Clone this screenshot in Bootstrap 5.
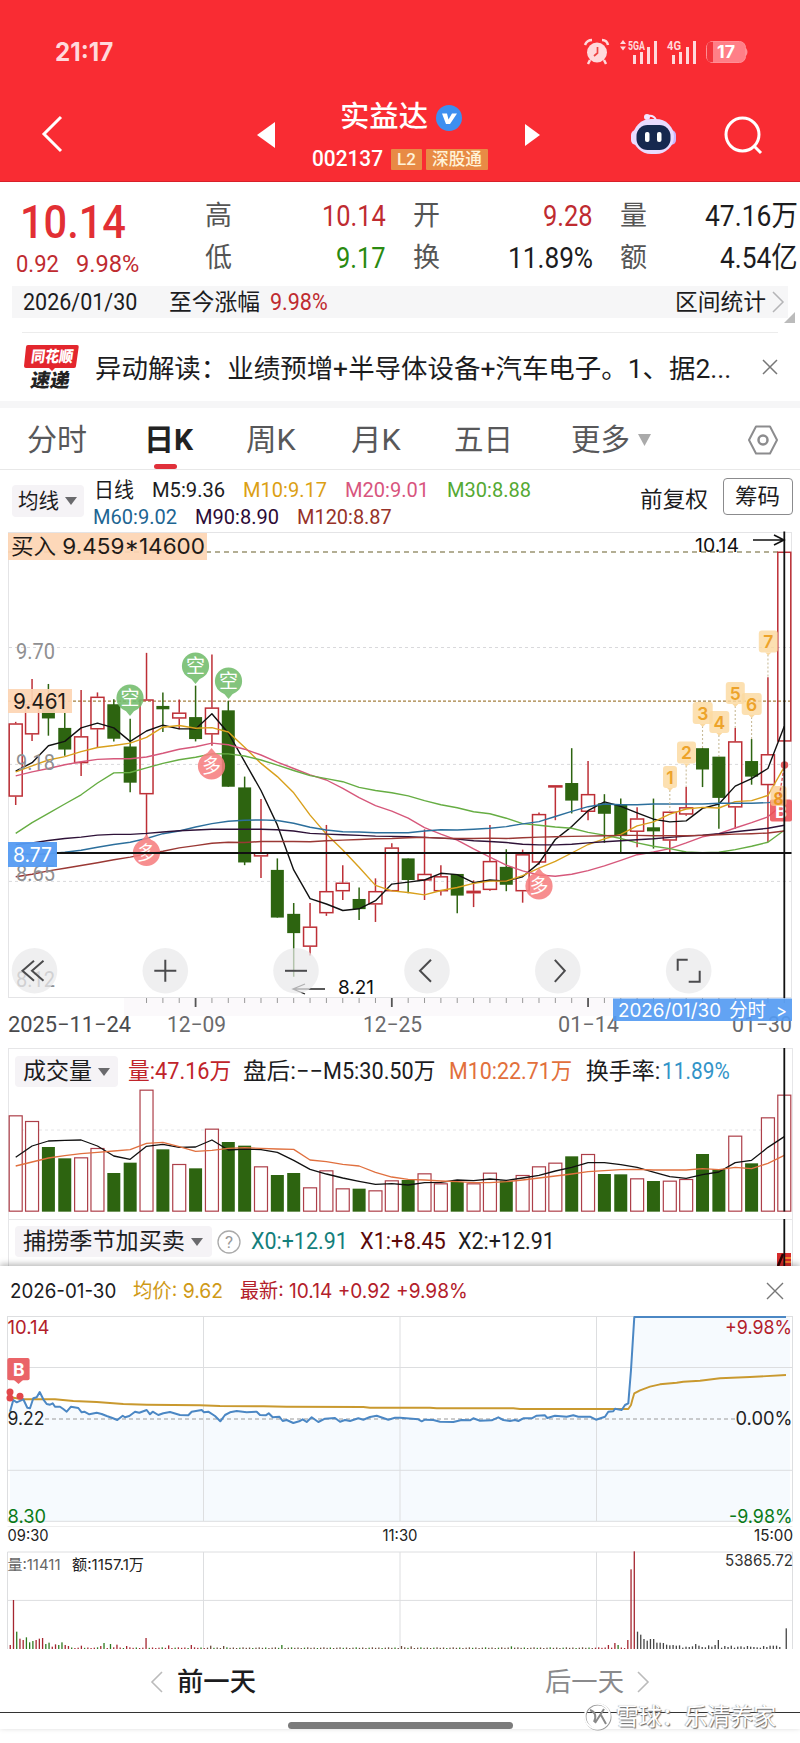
<!DOCTYPE html>
<html lang="zh-CN">
<head>
<meta charset="utf-8">
<meta name="viewport" content="width=device-width, initial-scale=1">
<title>实益达 002137</title>
<link href="https://cdn.jsdelivr.net/npm/bootstrap@5.3.0/dist/css/bootstrap.min.css" rel="stylesheet">
<style>
  :root { --up:#bf2b30; --down:#2a8a10; --din:Roboto,"Noto Sans CJK SC",sans-serif; --round:Inter,"Noto Sans CJK SC",sans-serif; }
  body { width:800px; height:1743px; overflow:hidden; background:#fff; color:#1c1c1e; font-family:var(--din); line-height:1; }
  svg { display:block; overflow:visible; }
  .fit { display:inline-block; white-space:nowrap; transform-origin:0 50%; flex:none; }
  .up { color:var(--up); } .down { color:var(--down); }
  .app-head { height:182px; background:#f92c33; color:#fff; border-bottom:1px solid #d8202a; }
  .status { height:104px; padding:0 51px 0 55px; }
  .clock { font:700 25px/1 var(--round); color:#ffd9dc; }
  .title-bar { height:77px; padding:0 36px 0 41px; }
  .stock-name { font-size:29px; font-weight:500; }
  .code { font-size:22px; font-weight:500; }
  .chip { height:21px; background:#e88a45; color:#fff3d8; font-size:17px; font-weight:500; border-radius:1px; }
  .quote { height:104px; }
  .price { font-size:47px; font-weight:500; color:#e22f34; }
  .delta { font-size:24px; }
  .quote-grid { display:grid; grid-template-columns:181px 180px 178px; column-gap:27px; align-content:start; padding-top:13px; font-size:29px; }
  .quote-grid > div { height:42px; }
  .quote-grid .key { font-size:27px; color:#555; }
  .range-strip { height:32px; margin:0 12px; background:#f6f6f7; font-size:23px; }
  .news { height:69px; margin:14px 22px 0; border-top:1px solid #ececec; font-size:26px; }
  .band { height:7px; background:#f6f6f7; }
  .tabs { height:62px; padding:3px 0 0 27px; border-bottom:1px solid #e8e8e8; font-size:30px; color:#58585a; }
  .tabs .on { color:#222; font-weight:700; left:-1px; }
  .tabs .on i { left:10px; top:39px; width:23px; height:5px; border-radius:3px; background:#e0303a; }
  .ma { height:61px; font-size:21px; }
  .drop { background:#f5f3f6; border-radius:4px; }
  .caret { width:0; height:0; border:6px solid transparent; border-top:8px solid #6a6a6d; border-bottom:0; }
  .chips-btn { width:70px; height:37px; margin-right:7px; border:1px solid #8b8b8d; border-radius:4px; font-size:22px; }
  .kline { height:517px; padding-top:1px; }
  .pane { border:1px solid #e6e6e8; border-bottom:0; margin:0 7px 0 8px; }
  .pane svg.plot { position:absolute; left:-9px; top:-1px; }
  .vol { height:171px; font-size:23px; }
  .sub { height:47px; font-size:23px; }
  .sheet { background:#fff; box-shadow:0 -2px 6px rgba(0,0,0,.28); font-family:var(--round); }
  .sheet-head { height:50px; padding:0 17px 0 10px; font-size:20px; }
  .day-nav { height:62px; border-bottom:1px solid #333; font-size:26px; font-family:var(--din); }
  .home { width:225px; height:7px; border-radius:4px; background:#7b7b7b; margin:9px 0 0 288px; }
  .watermark { left:583px; top:1702px; color:#fff; text-shadow:1px 1px 1px #666, -1px 0 1px #bbb; font-size:24px; }
  .bb { font-family:var(--round); }
</style>
</head>
<body class="position-relative">

<header class="app-head">
  <div class="status d-flex align-items-center justify-content-between">
    <span class="clock fit" data-w="58">21:17</span>
    <svg width="164" height="26" viewBox="0 0 164 26" fill="#ffd9dc">
      <circle cx="12" cy="13.500" r="10"/><path d="M0 6Q2 1 7 1M17 1Q22 1 23 6" fill="none" stroke="#ffd9dc" stroke-width="2.500"/><path d="M5 21 3 25M19 21 21 25" stroke="#ffd9dc" stroke-width="2.500"/><path d="M12.500 8V14L9 17" stroke="#e44" stroke-width="1.700" fill="none"/>
      <path d="M35 5 38 1 41 5ZM35 7.500 38 11.500 41 7.500Z"/>
      <text x="43" y="11" font-size="13" font-weight="700" textLength="17" lengthAdjust="spacingAndGlyphs">5GA</text>
      <path d="M48 16h3v9h-3zM55 13h3v12h-3zM62 8h3v17h-3zM69 2h3v23h-3zM87 16h3v9h-3zM94 13h3v12h-3zM101 8h3v17h-3zM108 2h3v23h-3z"/>
      <text x="82" y="11" font-size="13" font-weight="700" textLength="14" lengthAdjust="spacingAndGlyphs">4G</text>
      <rect x="121.500" y="2.500" width="39" height="21" rx="6" fill="#ff7f87" stroke="#ff8f95"/><path d="M128 3h-2q-4 0-4 5v10q0 5 4 5h2z" fill="#f2343c"/><path d="M161 9q3 4 0 8z" fill="#ff8f95"/>
      <text x="132" y="19" font-size="17" font-weight="700" fill="#fff" font-family="Inter" textLength="18" lengthAdjust="spacingAndGlyphs">17</text>
    </svg>
  </div>
  <div class="title-bar d-flex align-items-start">
    <svg width="22" height="36" class="mt-2" viewBox="0 0 22 36"><path d="M20 5 3 22 20 39" fill="none" stroke="#fff" stroke-width="3"/></svg>
    <svg width="18" height="26" style="margin:18px 0 0 194px"><path d="M18 0V26L0 13Z" fill="#fff"/></svg>
    <div style="width:178px;margin-left:37px">
      <div class="d-flex align-items-center" style="height:27px;padding-left:28px">
        <span class="stock-name fit" data-w="88">实益达</span>
        <svg class="ms-2" width="26" height="26" viewBox="0 0 26 26"><circle cx="13" cy="13" r="13" fill="#3d8ff0"/><path d="M6 8.500h5l1.500 6L16 8.500h5L14 19h-4z" fill="#fff"/></svg>
      </div>
      <div class="d-flex align-items-center" style="height:22px;margin-top:17px">
        <span class="code fit" data-w="71">002137</span>
        <span class="chip d-flex align-items-center justify-content-center" style="width:31px;margin-left:8px"><span>L2</span></span>
        <span class="chip d-flex align-items-center justify-content-center" style="width:62px;margin-left:4px"><span class="fit" data-w="50">深股通</span></span>
      </div>
    </div>
    <svg width="15" height="22" style="margin:20px 0 0 35px"><path d="M0 0V22L15 11Z" fill="#fff"/></svg>
    <svg width="46" height="42" viewBox="0 0 46 42" style="margin:9px 0 0 91px">
      <path d="M25 7Q23 2 17 3" fill="none" stroke="#f3e6ff" stroke-width="2"/><circle cx="16" cy="4" r="3" fill="#f3e6ff"/>
      <rect y="17" width="10" height="15" rx="5" fill="#eddcff"/><rect x="35" y="17" width="10" height="15" rx="5" fill="#c9b8ff"/>
      <rect x="2" y="6" width="41" height="35" rx="18" fill="#e9dcff"/><rect x="5.500" y="12" width="34" height="25" rx="11" fill="#16284f"/>
      <rect x="14" y="19" width="4.500" height="10" rx="2" fill="#fff"/><rect x="26" y="19" width="4.500" height="10" rx="2" fill="#fff"/>
    </svg>
    <svg width="39" height="38" viewBox="0 0 39 38" style="margin:12px 0 0 47px"><circle cx="18.500" cy="18.500" r="16.500" fill="none" stroke="#fff" stroke-width="3"/><path d="m30 30 7 7" stroke="#fff" stroke-width="3"/></svg>
  </div>
</header>

<section class="quote d-flex">
  <div style="width:205px;padding:16px 0 0 16px">
    <div style="height:47px;padding-left:4px"><span class="price fit" data-w="106">10.14</span></div>
    <div class="d-flex up delta" style="margin-top:7px;gap:17px"><span class="fit" data-w="43">0.92</span><span class="fit" data-w="63">9.98%</span></div>
  </div>
  <div class="quote-grid">
    <div class="d-flex align-items-center justify-content-between"><span class="key">高</span><span class="up fit" data-w="64">10.14</span></div>
    <div class="d-flex align-items-center justify-content-between"><span class="key">开</span><span class="up fit" data-w="50">9.28</span></div>
    <div class="d-flex align-items-center justify-content-between"><span class="key">量</span><span class="fit" data-w="93">47.16万</span></div>
    <div class="d-flex align-items-center justify-content-between"><span class="key">低</span><span class="down fit" data-w="50">9.17</span></div>
    <div class="d-flex align-items-center justify-content-between"><span class="key">换</span><span class="fit" data-w="85">11.89%</span></div>
    <div class="d-flex align-items-center justify-content-between"><span class="key">额</span><span class="fit" data-w="78">4.54亿</span></div>
  </div>
</section>

<section class="range-strip d-flex align-items-center position-relative" style="padding:0 4px 0 11px">
  <span class="fit" data-w="114">2026/01/30</span>
  <span class="fit" data-w="91" style="margin-left:32px">至今涨幅</span>
  <span class="fit up" data-w="58" style="margin-left:10px">9.98%</span>
  <span class="fit ms-auto" data-w="91">区间统计</span>
  <svg width="12" height="22" style="margin-left:6px"><path d="m1 1 10 10L1 21" fill="none" stroke="#b5b5b7" stroke-width="1.500"/></svg>
  <svg width="11" height="11" class="position-absolute" style="right:-7px;top:26px"><path d="M11 0V11H0Z" fill="#bbb"/></svg>
</section>

<section class="news d-flex align-items-center">
  <svg width="55" height="46" viewBox="0 0 55 46" style="margin-left:2px">
    <path d="M4 1H53q2 0 1.700 2L52 22q0 2-2 2H31l-3 3-3-3H2q-2 0-2-2L2 3Q2 1 4 1Z" fill="#e3262d"/>
    <g font-family="Noto Sans CJK SC" font-weight="900"><text transform="skewX(-8)" x="9" y="18.500" font-size="15.500" fill="#fff" textLength="42" lengthAdjust="spacingAndGlyphs">同花顺</text>
    <text transform="skewX(-10)" x="13.500" y="43.500" font-size="19" fill="#222" textLength="39" lengthAdjust="spacingAndGlyphs">速递</text></g>
  </svg>
  <span class="fit" data-w="636" style="margin:3px 0 0 16px">异动解读：业绩预增+半导体设备+汽车电子。1、据2...</span>
  <svg width="16" height="16" class="ms-auto"><path d="M1 1 15 15M15 1 1 15" stroke="#777" stroke-width="1.500"/></svg>
</section>
<div class="band"></div>

<nav class="tabs d-flex align-items-center">
  <span class="fit" data-w="60">分时</span>
  <span class="position-relative on" style="margin-left:58px"><span class="fit" data-w="49">日K</span><i class="position-absolute"></i></span>
  <span class="fit" data-w="50" style="margin-left:52px">周K</span>
  <span class="fit" data-w="50" style="margin-left:55px">月K</span>
  <span class="fit" data-w="59" style="margin-left:53px">五日</span>
  <span class="fit" data-w="59" style="margin-left:58px">更多</span>
  <svg width="13" height="12" style="margin-left:8px"><path d="M0 0H13L6.500 12Z" fill="#aaa"/></svg>
  <svg width="30" height="30" viewBox="0 0 30 30" style="margin-left:97px"><path d="M8 1.500H22L29 15 22 28.500H8L1 15Z" fill="none" stroke="#8c8c8e" stroke-width="2" stroke-linejoin="round"/><circle cx="15" cy="15" r="4.500" fill="none" stroke="#8c8c8e" stroke-width="2.500"/></svg>
</nav>

<section class="ma d-flex">
  <div class="drop d-flex align-items-center" style="width:72px;height:32px;margin:15px 0 0 12px;padding:0 7px 0 6px"><span class="fit" data-w="41">均线</span><span class="caret ms-auto"></span></div>
  <div style="margin:7px 0 0 9px">
    <div class="d-flex align-items-center" style="height:27px;padding-left:1px;gap:18px">
      <span class="fit" data-w="40">日线</span><span class="fit" data-w="73">M5:9.36</span>
      <span class="fit" data-w="84" style="color:#dca014">M10:9.17</span><span class="fit" data-w="84" style="color:#d8557e">M20:9.01</span><span class="fit" data-w="84" style="color:#55a933">M30:8.88</span>
    </div>
    <div class="d-flex align-items-center" style="height:27px;gap:18px">
      <span class="fit" data-w="84" style="color:#1d6592">M60:9.02</span><span class="fit" data-w="84" style="color:#2c0a36">M90:8.90</span><span class="fit" data-w="95" style="color:#973228">M120:8.87</span>
    </div>
  </div>
  <span class="fit ms-auto" data-w="68" style="margin-top:19px;font-size:22px">前复权</span>
  <div class="chips-btn d-flex align-items-center justify-content-center" style="margin-top:8px;margin-left:15px"><span class="fit" data-w="45">筹码</span></div>
</section>

<section class="kline"><svg id="kline" width="800" height="515" viewBox="0 532 800 515"></svg></section>

<section class="pane vol position-relative">
  <svg class="plot" id="volume" width="800" height="171" viewBox="0 1048 800 171"></svg>
  <div class="d-flex align-items-center position-relative" style="padding:7px 0 0 6px">
    <div class="drop d-flex align-items-center" style="width:103px;height:31px;padding:0 8px"><span class="fit" data-w="69">成交量</span><span class="caret ms-auto"></span></div>
    <span class="fit" data-w="103" style="margin-left:10px;color:#c0242a">量:47.16万</span>
    <span class="fit" data-w="80" style="margin-left:12px">盘后:−−</span><span class="fit" data-w="112">M5:30.50万</span>
    <span class="fit" data-w="123" style="margin-left:13px;color:#e2703c">M10:22.71万</span>
    <span class="fit" data-w="75" style="margin-left:14px">换手率:</span><span class="fit" data-w="68" style="margin-left:2px;color:#3294c8">11.89%</span>
  </div>
</section>

<section class="pane sub position-relative">
  <svg class="plot" width="800" height="47" viewBox="0 1219 800 47"><rect x="777" y="1253" width="14" height="13" fill="#d62b2b"/><path d="M778 1266 783 1254" stroke="#300" stroke-width="2.500"/><path d="M785 1258h6M785 1262h6" stroke="#ff9b2f" stroke-width="1.500"/><path d="M784.300 1219V1266" stroke="#111" stroke-width="1.800"/></svg>
  <div class="d-flex align-items-center position-relative" style="padding:6px 0 0 6px">
    <div class="drop d-flex align-items-center" style="width:197px;height:31px;padding:0 9px 0 8px"><span class="fit" data-w="162">捕捞季节加买卖</span><span class="caret ms-auto"></span></div>
    <svg width="24" height="24" style="margin-left:5px"><circle cx="12" cy="12" r="11" fill="none" stroke="#aaa" stroke-width="1.300"/><text x="12" y="18" text-anchor="middle" font-size="17" fill="#999">?</text></svg>
    <span class="fit" data-w="97" style="margin-left:10px;color:#147f7c">X0:+12.91</span>
    <span class="fit" data-w="86" style="margin-left:12px;color:#5c0808">X1:+8.45</span>
    <span class="fit" data-w="97" style="margin-left:12px">X2:+12.91</span>
  </div>
</section>

<section class="sheet position-relative">
  <div class="sheet-head d-flex align-items-center">
    <span class="fit" data-w="106">2026-01-30</span>
    <span class="fit" data-w="90" style="margin-left:17px;color:#cf9a17">均价: 9.62</span>
    <span class="fit" data-w="228" style="margin-left:17px;color:#b3202a">最新: 10.14 +0.92 +9.98%</span>
    <svg width="16" height="16" class="ms-auto"><path d="M0 0 16 16M16 0 0 16" stroke="#777" stroke-width="1.400"/></svg>
  </div>
  <svg id="intraday" width="800" height="335" viewBox="0 1316 800 335"></svg>
  <div class="day-nav d-flex align-items-center">
    <svg width="12" height="22" style="margin-left:151px"><path d="M11 1 1 11 11 21" fill="none" stroke="#bbb" stroke-width="1.600"/></svg>
    <span class="fit fw-medium" data-w="79" style="margin-left:14px">前一天</span>
    <span class="fit" data-w="79" style="margin-left:289px;color:#8a8a8c">后一天</span>
    <svg width="12" height="22" style="margin-left:13px"><path d="m1 1 10 10L1 21" fill="none" stroke="#bbb" stroke-width="1.600"/></svg>
  </div>
  <div class="home"></div>
</section>

<div class="watermark position-absolute d-flex align-items-center">
  <svg width="29" height="29" viewBox="0 0 29 29" fill="none"><circle cx="15" cy="15" r="12.500" stroke="#999" stroke-width="2"/><circle cx="14.300" cy="14.300" r="12.500" stroke="#fff" stroke-width="1.800"/><path d="M7 8q8 3 4 12M21 7l-9 14M18 13l5 9" stroke="#888" stroke-width="2"/></svg>
  <span class="fit" data-w="160" style="margin-left:4px">雪球：乐清养家</span>
</div>

<script src="https://cdn.jsdelivr.net/npm/bootstrap@5.3.0/dist/js/bootstrap.bundle.min.js"></script>
<script>
// Condense labels to the DIN-like widths of the design.
document.querySelectorAll('.fit').forEach(e => {
  const n = e.offsetWidth, w = +e.dataset.w;
  e.style.transform = `scaleX(${w / n})`;
  e.style.marginRight = (w - n) + 'px';
});

const RED = '#bd2f36', GREEN = '#2d6410';
const X = i => 15.7 + 16.353 * i;
const Y = v => 520 + v / 2.958;
const line = (x1, y1, x2, y2, c, w = 1, d = '') => `<path d="M${x1} ${y1}L${x2} ${y2}" stroke="${c}" stroke-width="${w}" stroke-dasharray="${d}" fill="none"/>`;
const rect = (x, y, w, h, f, s = 'none', sw = 1, extra = '') => `<rect x="${x}" y="${y}" width="${w}" height="${h}" fill="${f}" stroke="${s}" stroke-width="${sw}" ${extra}/>`;
const text = (x, y, w, s, size, c, extra = '') => `<text x="${x}" y="${y}" font-size="${size}" fill="${c}" textLength="${w}" lengthAdjust="spacingAndGlyphs" ${extra}>${s}</text>`;
const poly = (pts, c, w = 1.2) => `<polyline points="${pts.map(p => p.join()).join(' ')}" fill="none" stroke="${c}" stroke-width="${w}" stroke-linejoin="round"/>`;

// kind, high, body top, body bottom, low
const candles = [
 ['r',597,602,818,843],['r',470,545,634,654],['g',485,545,587,638],['g',570,615,679,697],['r',503,640,719,757],['r',510,523,619,672],['g',530,545,647,655],['g',588,670,777,805],
 ['r',393,531,811,935],['g',510,550,560,627],['r',531,570,587,619],['g',490,583,648,655],['r',398,555,634,668],['g',535,563,789,789],['g',759,791,1013,1021],['r',825,983,995,1059],
 ['g',1001,1035,1176,1176],['g',1133,1165,1222,1351],['r',1133,1203,1262,1288],['r',902,1098,1163,1171],['r',1021,1073,1098,1124],['g',1087,1121,1151,1183],['r',1060,1098,1137,1189],['r',956,969,1098,1098],
 ['g',1001,1001,1065,1104],['r',915,1047,1066,1124],['r',1021,1054,1098,1111],['g',1047,1047,1111,1163],['r',1066,1097,1104,1145],['r',902,1009,1094,1097],['g',974,1026,1079,1098],['r',975,989,1098,1132],
 ['r',865,870,1013,1020],['r',785,785,791,888],['g',675,778,830,868],['r',713,811,863,888],['g',811,838,869,955],['g',824,842,935,983],['r',850,883,922,968],['g',824,909,921,972],
 ['r',863,863,948,983],['r',790,850,871,875],['g',675,675,738,790],['g',700,700,822,913],['r',615,655,850,913],['g',648,713,759,783],['r',465,693,784,953],['r',94,94,655,655]];
const averages = {
 '#111': [743,718,668,655,615,601,615,655,624,607,618,618,573,630,715,800,902,1035,1120,1136,1155,1150,1126,1077,1071,1065,1045,1049,1073,1065,1068,1055,1015,945,907,860,834,847,866,885,893,890,853,840,787,765,735,610],
 '#d9a01c': [745,727,710,700,685,673,667,660,643,613,608,616,614,627,672,720,759,807,873,929,976,1027,1081,1097,1102,1109,1096,1087,1075,1068,1068,1052,1030,1010,985,960,943,930,905,893,870,855,850,852,833,830,815,730],
 '#d6587b': [757,745,735,724,715,708,706,706,701,690,678,671,660,665,678,695,716,735,754,769,794,821,845,861,882,910,929,947,973,997,1021,1038,1050,1054,1048,1037,1023,1007,990,982,972,955,937,928,911,895,878,838],
 '#66ad43': [927,895,868,840,813,778,748,747,733,720,709,702,692,692,698,710,725,741,756,765,774,791,800,807,816,830,842,851,863,869,882,898,903,908,912,924,932,942,955,965,972,982,984,983,975,965,953,918],
 '#2c6f9c': [985,990,987,983,977,968,960,953,942,928,920,908,898,891,888,887,889,897,909,917,922,923,925,925,925,920,916,917,915,912,907,899,892,877,862,848,840,842,842,840,840,840,840,838,838,838,836,832],
 '#2e1238': [960,955,948,942,938,932,930,930,927,923,919,917,915,915,915,915,916,920,927,929,931,933,935,936,937,939,941,944,949,951,954,959,961,961,959,955,952,949,946,943,939,935,932,928,922,917,912,903],
 '#9a3834': [1055,1048,1038,1030,1022,1014,1005,997,988,980,970,963,956,953,954,951,951,951,952,949,947,945,943,942,940,939,941,942,942,941,942,940,938,937,936,935,934,933,933,934,934,934,933,931,929,928,926,920]};

let k = rect(8.5, 532.5, 783, 465, 'none', '#e4e4e6');
[647.5, 764.4, 881.4].forEach(y => k += line(9, y, 791, y, '#d9d9dc', 1, '3 3'));
k += line(8, 552, 780, 552, '#9b9472', 1.3, '5 4') + line(8, 701.2, 790, 701.2, '#a5803f', 1.3, '3 2');
candles.forEach(([c, h, t, b, l], i) => {
  const x = X(i), col = c === 'r' ? RED : GREEN;
  if (c === 'g') k += line(x, Y(h), x, Y(l), col, 1.5) + rect(x - 6.5, Y(t), 13, Y(b) - Y(t), col);
  else k += line(x, Y(h), x, Y(t), col, 1.5) + line(x, Y(b), x, Y(l), col, 1.5) + rect(x - 6.5, Y(t) + .5, 13, Math.max(Y(b) - Y(t) - 1, 1), 'none', col, 1.5);
});
Object.entries(averages).forEach(([c, a]) => k += poly(a.map((v, i) => [X(i).toFixed(1), Y(v).toFixed(1)]), c, 1.4));
[['9.70', 658.6], ['9.18', 769.5], ['8.65', 881], ['8.12', 986.5]].forEach(([s, y]) => k += text(16, y, 39, s, 22, '#909092'));
// Signal bubbles
const bubble = (x, y, s, c, tip) => `<g opacity=".88"><circle cx="${x}" cy="${y}" r="13.600" fill="${c}"/><path d="M${x - 5} ${y + tip * 12}h10L${x} ${y + tip * 18}Z" fill="${c}"/><text x="${x}" y="${y + 7}" text-anchor="middle" font-size="19" fill="#fff">${s}</text></g>`;
[[130, 698], [195.5, 666], [228.5, 681]].forEach(p => k += bubble(...p, '空', '#72bd6c', 1));
[[146.500, 852.500], [211.500, 766], [539, 886]].forEach(p => k += bubble(...p, '多', '#f77f80', -1));
// Numbered tags
[[1,670,777,40,14],[2,686.5,752.5,41,19],[3,702.7,713,42,20],[4,719.3,722,43,20],[5,735.3,693,44,19],[6,751.7,704,45,20],[7,768.3,641.5,46,19]].forEach(([n, x, y, i, w]) => {
  k += line(X(i), y + 13, X(i), Y(candles[i][1]), '#c9bc9a', 1.1, '2 2') + rect(x - w / 2, y - 11, w, 22, '#fbd9a0', 'none', 1, 'rx="3" opacity=".82"') +
    `<path d="M${x - 3} ${y + 11}h6l-3 3z" fill="#fbd9a0"/><text x="${x}" y="${y + 6.500}" text-anchor="middle" font-family="Inter" font-weight="600" font-size="17.500" fill="#eda32a">${n}</text>`;
});
k += rect(770, 799.6, 22, 22, '#ec5055', 'none', 1, 'rx="2" opacity=".88"') + `<text x="781" y="818" text-anchor="middle" font-size="19" font-weight="700" fill="#fff">B</text>` +
  rect(770.5, 786, 16, 20, '#fac98a', 'none', 1, 'rx="3" opacity=".75"') + `<text x="778.500" y="805" text-anchor="middle" font-size="18" font-weight="600" fill="#e9971f">8</text>` +
  line(784, 768, 779, 798, '#e05a5a', 1.4, '3 2') + `<circle cx="784.500" cy="765" r="3.800" fill="#e05a5a"/>`;
// Crosshair
k += line(56, 853, 791.5, 853, '#111', 2) + line(784.3, 531.5, 784.3, 998, '#111', 1.8);
k += rect(8, 533, 199, 27, '#fdd5b4', 'none', 1, 'opacity=".93"') + text(11, 554, 194, '买入 9.459*14600', 22, '#1f1b18', 'class="bb"');
k += rect(8, 689, 64, 24, '#fdd5b4', 'none', 1, 'opacity=".93"') + text(13, 709, 53, '9.461', 21.5, '#1f1b18', 'class="bb"');
k += rect(8, 842, 49, 25, '#559bf2', 'none', 1, 'opacity=".95"') + text(13, 861.5, 39, '8.77', 20, '#fff', 'class="bb"');
k += text(695, 551.5, 44, '10.14', 19, '#111', 'class="bb"') + `<path d="M753 540H783M774 535l10 5-10 5" fill="none" stroke="#111" stroke-width="1.600"/>`;
k += text(338, 994, 36, '8.21', 19, '#111', 'class="bb"') + `<path d="M325 989H293M305 984l-12 5 12 5" fill="none" stroke="#222" stroke-width="1.300"/>`;
// Chart controls
[[34.5,'M-.500 -10-12 0-.500 10M9-10-2.500 0 9 10'],[165.3,'M-11 0H11M0-11V11'],[296,'M-11 0H11'],[427,'M4-11-7 0 4 11'],[557.8,'M-3-11 7 0-3 11'],[688.7,'M-11 0V-11H-1M11 0V11H0']].forEach(([x, d]) =>
  k += `<g transform="translate(${x} 970.800)"><circle r="22.800" fill="#e9e9ea" opacity=".72"/><path d="${d}" fill="none" stroke="#4b4b4d" stroke-width="2"/></g>`);
// Date axis
k += rect(124, 998, 667, 18, '#fbf9fb');
for (let i = 8; i < 48; i++) k += line(X(i), 998, X(i), [11, 23, 35].includes(i) ? 1007 : 1003, [11, 23, 35].includes(i) ? '#555' : '#999', [11, 23, 35].includes(i) ? 1.8 : 1);
[['2025−11−24', 8, 123, '#4a4a4c'], ['12−09', 167, 59], ['12−25', 363, 59], ['01−14', 558, 61], ['01−30', 732, 60]].forEach(([s, x, w, c]) => k += text(x, 1032, w, s, 22, c || '#6a6a6c'));
k += rect(613, 998.5, 179, 22.5, '#559bf2', 'none', 1, 'opacity=".92"') + text(618, 1017, 103, '2026/01/30', 19, '#fff', 'class="bb"') + text(729, 1017, 37, '分时', 19, '#fff') + text(776, 1017, 11, '&gt;', 18, '#fff', 'class="bb"');
document.getElementById('kline').innerHTML = k;

// Volume pane
const V = v => 1030 + v / 3;
const vols = [256,273,351,385,382,354,429,398,179,358,402,415,296,336,347,409,435,429,472,421,475,476,481,451,450,430,460,456,460,428,452,435,409,398,379,372,432,433,445,453,452,447,372,418,317,400,262,194];
const v5 = [382,348,333,331,330,348,378,388,349,343,352,351,330,360,357,359,367,391,418,432,444,454,463,461,465,458,457,450,452,447,451,444,436,423,412,398,398,404,412,426,440,445,434,426,398,391,352,320];
const v10 = [408,396,384,377,371,367,363,359,340,337,350,364,361,355,353,355,357,358,390,395,403,408,427,441,448,450,453,455,458,458,455,450,444,438,432,425,422,419,418,420,420,420,416,419,412,416,400,376];
let v = line(9, 1130, 791, 1130, '#e4e4e6', 1, '3 3');
vols.forEach((t, i) => v += candles[i][0] === 'g' ? rect(X(i) - 6.5, V(t), 13, V(545) - V(t), GREEN) : rect(X(i) - 6.5, V(t) + .5, 13, V(545) - V(t) - 1, '#fff', '#ad3f49', 1.2));
v += poly(v5.map((a, i) => [X(i), V(a)]), '#111', 1.3) + poly(v10.map((a, i) => [X(i), V(a)]), '#e0703f', 1.3) + line(784.3, 1048, 784.3, 1211.5, '#111', 1.8);
document.getElementById('volume').innerHTML = v;

// Intraday sheet
const P = a => a.map(([x, y]) => [(x / 3).toFixed(1), (1260 + y / 3).toFixed(1)]);
const price = P([[30,455],[40,420],[50,427],[70,418],[82,443],[90,445],[100,415],[110,412],[119,396],[130,418],[140,432],[150,434],[158,430],[165,440],[180,440],[190,447],[200,455],[213,440],[235,444],[245,457],[253,455],[268,463],[290,458],[305,462],[320,468],[335,473],[352,480],[368,467],[375,472],[388,468],[405,455],[418,458],[440,450],[450,463],[458,455],[475,465],[490,460],[510,456],[540,465],[565,466],[575,455],[605,450],[612,457],[625,455],[645,468],[661,484],[675,465],[690,457],[710,453],[740,457],[770,455],[780,465],[797,466],[806,460],[818,472],[838,470],[848,483],[860,480],[880,489],[900,483],[908,478],[920,486],[935,472],[955,486],[975,476],[1005,474],[1020,485],[1035,480],[1050,483],[1075,475],[1090,479],[1110,471],[1130,467],[1165,479],[1185,473],[1200,473],[1255,478],[1265,484],[1275,479],[1300,480],[1320,485],[1360,486],[1385,480],[1410,481],[1420,475],[1440,482],[1475,481],[1495,472],[1510,480],[1530,483],[1545,480],[1555,483],[1570,475],[1595,475],[1610,467],[1635,466],[1642,474],[1665,467],[1700,470],[1720,466],[1735,470],[1770,470],[1788,479],[1815,470],[1825,455],[1840,454],[1845,446],[1865,450],[1875,435],[1885,430],[1893,330],[1903,171],[2358,171]]);
const avg = P([[30,412],[70,418],[165,418],[220,423],[290,426],[370,432],[440,434],[600,436],[660,438],[790,439],[860,440],[1090,441],[1110,443],[1290,443],[1310,445],[1540,445],[1560,447],[1840,447],[1885,447],[1893,435],[1897,420],[1903,400],[1920,391],[1950,380],[1980,373],[2030,368],[2050,365],[2100,362],[2160,355],[2250,351],[2358,345]]);
let s = `<polygon points="10,1521 ${price.map(p => p.join()).join(' ')} 790,1317 790,1521" fill="#f6fafe"/>`;
[1316.5, 1367.5, 1470.3, 1521.3, 1552, 1600.4].forEach(y => s += line(7.5, y, 792.5, y, '#dddee0'));
s += line(7.5, 1526.5, 792.5, 1526.5, '#eee');
[7.5, 203.5, 400, 596.5, 792.5].forEach(x => s += line(x, 1316, x, 1521, '#dddee0') + line(x, 1552, x, 1649, '#dddee0'));
s += line(45, 1419, 735, 1419, '#999', 1.1, '4 3') + poly(avg, '#c9992f', 1.9) + poly(price, '#4b87c4', 2);
const T = (x, y, w, t, size, c) => text(x, y, w, t, size, c, 'class="bb"');
s += T(7.5, 1333.5, 42, '10.14', 19, '#b3202a') + T(7.5, 1425, 37, '9.22', 19, '#222') + T(7.5, 1522.5, 38.5, '8.30', 19, '#0a7a18');
s += T(725, 1333.5, 67, '+9.98%', 19, '#b3202a') + T(735.5, 1425, 57, '0.00%', 19, '#222') + T(729, 1522.5, 63.5, '-9.98%', 19, '#0a7a18');
s += T(7.5, 1540.5, 41, '09:30', 15.5, '#222') + T(382.5, 1540.5, 35, '11:30', 15.5, '#222') + T(754, 1540.5, 39, '15:00', 15.5, '#222');
s += rect(7.3, 1358, 22.3, 22.3, '#ea6468', 'none', 1, 'rx="2"') + `<path d="M14 1380h9l-4.500 4z" fill="#ea6468"/><text x="18.700" y="1375.500" text-anchor="middle" font-family="Inter" font-weight="700" font-size="17.500" fill="#fff">B</text>`;
[[10, 1392], [10, 1398], [20, 1396.300]].forEach(([x, y]) => s += `<circle cx="${x}" cy="${y}" r="3.500" fill="#e2474b"/>`);
s += T(7.5, 1570, 53, '量:11411', 15, '#666') + T(72, 1570, 72, '额:1157.1万', 15, '#222') + T(725, 1565.5, 68, '53865.72', 16, '#333');
const spikes = {0:12,1:147,2:52,3:31,4:27,5:35,6:20,7:24,8:27,9:31,10:33,11:15,12:19,13:7,14:14,15:12,16:20,17:12,18:9,22:10,28:9,29:18,31:15,33:13,36:9,42:33,49:11,56:12,62:10,66:9,84:12,121:9,124:8,155:8,185:12,187:18,188:12,191:27,192:239,193:293,194:52,195:43,196:30,197:25,198:30,199:30,200:19,201:19,202:18,203:13,204:11,205:12,206:10,207:11,211:8,212:15,213:10,216:11,218:12,219:27,221:9,223:10,226:8,228:9,233:9,235:10,236:10,237:10,239:0,240:62};
for (let i = 0; i <= 240; i++) {
  const h = (spikes[i] ?? (i < 193 ? 3 + (i * 7 % 5) / 2 : 4 + i * 3 % 4)) / 3;
  const c = i > 193 ? '#444' : i === 2 || i % 4 === 3 && i < 180 && i !== 3 || [5, 6, 12, 16, 29, 84, 188].includes(i) ? '#2f7a1f' : i > 60 && i < 181 ? '#6b4a3a' : '#a52630';
  s += rect((30.6 + 9.7 * i) / 3 - .6, 1649 - h, 1.3, h, c);
}
document.getElementById('intraday').innerHTML = s;
</script>
</body>
</html>
